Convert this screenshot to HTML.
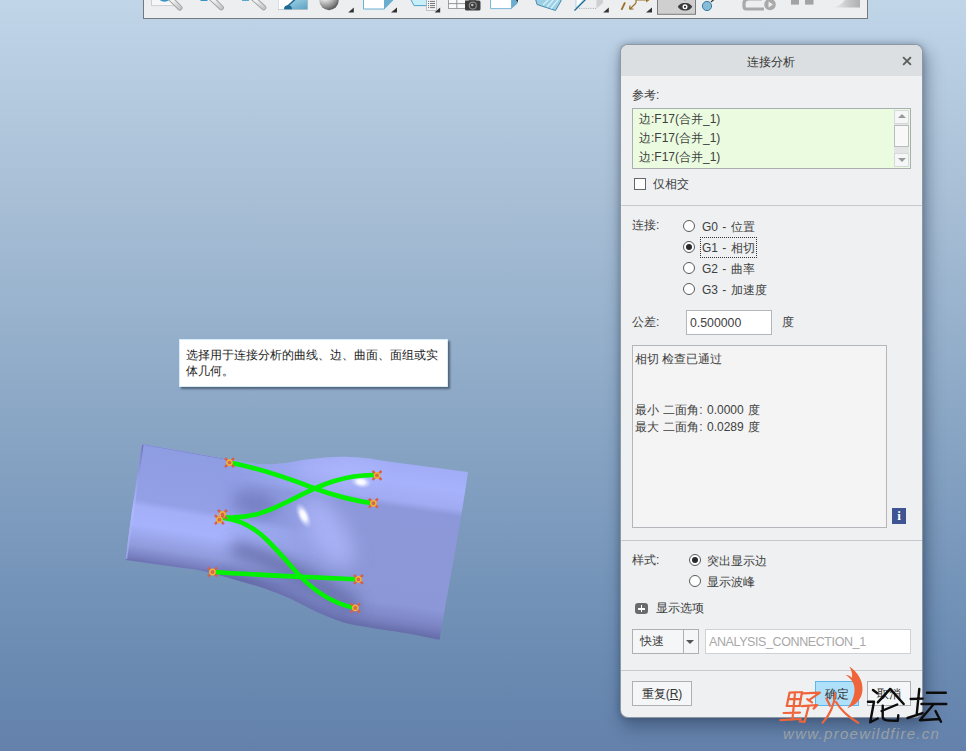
<!DOCTYPE html>
<html><head><meta charset="utf-8">
<style>
*{margin:0;padding:0;box-sizing:border-box}
html,body{width:966px;height:751px;overflow:hidden}
body{position:relative;font-family:"Liberation Sans",sans-serif;font-size:12px;color:#333;
background:linear-gradient(to bottom,#c0d5e8 0%,#a7bed5 27%,#86a3c3 60%,#7090b6 82%,#6381ab 100%)}
.a{position:absolute}
.t{position:absolute;white-space:nowrap;font-size:12px;color:#404040;line-height:14px}
#tb{left:143px;top:-2px;width:725px;height:21px;background:#eceef0;border:1px solid #75797d;border-top:none}
#dlg{left:621px;top:45px;width:301px;height:672px;background:#eef0f2;border-radius:7px;box-shadow:0 0 0 1px #8d98a4,0 0 6px 1px rgba(30,45,70,.3),3px 8px 16px 3px rgba(20,35,60,.35)}
#ttl{left:621px;top:45px;width:301px;height:31px;background:#dcdfe1;border-radius:7px 7px 0 0}
.sep{position:absolute;left:621px;width:301px;height:1px;background:#c6c9cd}
.radio{position:absolute;width:12px;height:12px;border:1px solid #5a5a5a;border-radius:50%;background:#fff}
.radio.on::after{content:"";position:absolute;left:2px;top:2px;width:6px;height:6px;border-radius:50%;background:#2a2a2a}
.btn{position:absolute;border:1px solid #adb1b5;background:#f5f6f7;text-align:center;font-size:12px;color:#333;line-height:24px}
#tip{left:179px;top:339px;width:269px;height:48px;background:#fff;border:1px solid #d6ecf9;box-shadow:2px 2px 2px rgba(40,50,70,.6)}
</style></head><body>

<div id="tb" class="a"></div>
<svg class="a" style="left:0;top:0" width="966" height="20" viewBox="0 0 966 20">
<defs>
<linearGradient id="hdl" x1="0" y1="0" x2="1" y2="1"><stop offset="0" stop-color="#fff"/><stop offset="1" stop-color="#c8c8c8"/></linearGradient>
<linearGradient id="blu" x1="0" y1="0" x2="1" y2="1"><stop offset="0" stop-color="#b8e0ee"/><stop offset="1" stop-color="#5aa2c4"/></linearGradient>
<radialGradient id="sph" cx="0.3" cy="0.2" r="0.8"><stop offset="0" stop-color="#ffffff"/><stop offset="0.35" stop-color="#e0e0e0"/><stop offset="0.8" stop-color="#8c8c8c"/><stop offset="1" stop-color="#5e5e5e"/></radialGradient>
<linearGradient id="gry" x1="0" y1="0" x2="1" y2="0"><stop offset="0" stop-color="#f0f0f0"/><stop offset="0.6" stop-color="#c6c6c6"/><stop offset="1" stop-color="#b0b0b0"/></linearGradient>
</defs>
<!-- zoom box -->
<path d="M151.5,-2 L174,-2 L174,5.6 L151.5,5.6 Z" fill="#f6f6f6" stroke="#c4c4c4" stroke-width="0.8"/>
<path d="M159.5,-1 Q164.5,2.8 169.5,-1" fill="none" stroke="#3a93c4" stroke-width="1.6"/>
<path d="M170,-2 L179.8,7.8" stroke="#a4a4a4" stroke-width="5.4" stroke-linecap="round"/>
<path d="M170,-2 L179.8,7.8" stroke="url(#hdl)" stroke-width="3.4" stroke-linecap="round"/>
<!-- zoom in -->
<path d="M200.5,0 L207.5,0 L207.5,1 L200.5,1Z" fill="#3a93c4"/>
<path d="M211,-2 L221.2,7.6" stroke="#a4a4a4" stroke-width="5.4" stroke-linecap="round"/>
<path d="M211,-2 L221.2,7.6" stroke="url(#hdl)" stroke-width="3.4" stroke-linecap="round"/>
<!-- zoom out -->
<path d="M242,0 L249,0 L249,0.8 L242,0.8Z" fill="#3a93c4"/>
<path d="M253,-2 L263.6,7.6" stroke="#a4a4a4" stroke-width="5.4" stroke-linecap="round"/>
<path d="M253,-2 L263.6,7.6" stroke="url(#hdl)" stroke-width="3.4" stroke-linecap="round"/>
<!-- refit / orient -->
<rect x="278.5" y="-2" width="29" height="11.3" fill="url(#blu)" stroke="#9ab" stroke-width="0.6"/>
<path d="M278.5,-2 L296,-2 L284.5,9.3 L278.5,9.3Z" fill="#fff"/>
<path d="M285,8.5 L295.5,-1" stroke="#1d6a92" stroke-width="1.5"/>
<path d="M284,9.3 A4,4 0 0 1 292,9.3Z" fill="#1d6a92"/>
<!-- sphere -->
<circle cx="329" cy="0.5" r="9.7" fill="url(#sph)"/>
<path d="M353.8,7.5 L353.8,12.6 L348.2,12.6Z" fill="#333"/>
<!-- cube -->
<path d="M363.5,-2 L384.5,-2 L384.5,9 L363.5,9Z" fill="#fff" stroke="#6ab0d2" stroke-width="1"/>
<path d="M384.5,-2 L393,-2 L393,0.5 L384.5,9.3Z" fill="#6aaecf"/>
<path d="M397,7.5 L397,12.6 L391,12.6Z" fill="#333"/>
<!-- view mgr -->
<path d="M410,-2 L426.5,-2 L426.5,5.6 L414,5.6 Z" fill="#c8eefa" stroke="#3f9acb" stroke-width="0.9"/>
<path d="M426.5,-2 L436.5,-2 L436.5,10.5 L426.5,10.5Z" fill="#f3f5f6" stroke="#aaa" stroke-width="0.7"/>
<path d="M430,1.4h5M430,3.5h5M430,5.6h5M430,7.6h5" stroke="#666" stroke-width="0.9"/><path d="M428.2,1.4h0.9M428.2,3.5h0.9M428.2,5.6h0.9M428.2,7.6h0.9" stroke="#444" stroke-width="0.9"/>
<path d="M440.2,7.5 L440.2,12.6 L434.6,12.6Z" fill="#333"/>
<!-- grid + camera -->
<rect x="448.5" y="-2" width="17" height="10.5" fill="#f8f9fa" stroke="#8a8a8a" stroke-width="0.8"/>
<path d="M456.8,-2V8.5M448.5,3.6H465.5" stroke="#8a8a8a" stroke-width="0.9"/>
<rect x="465" y="0.5" width="15.5" height="10" rx="1.5" fill="#3c3c3c"/>
<path d="M468.5,0.8 L470,-1 L475,-1 L476.5,0.8Z" fill="#3c3c3c"/>
<circle cx="472.8" cy="5.6" r="4.1" fill="#8a8a8a"/>
<circle cx="472.8" cy="5.6" r="2.9" fill="#3a3a3a"/>
<circle cx="472.3" cy="5" r="1.3" fill="#bbb"/>
<!-- cube 2 -->
<path d="M490.5,-2 L511.5,-2 L511.5,8.6 L490.5,8.6Z" fill="#fff" stroke="#7bbad8" stroke-width="1"/>
<path d="M511.5,-2 L517.5,-2 L517.5,3.5 L511.5,8.8Z" fill="#6aaecf"/>
<path d="M515,-1 L518,-1 L518,2.5Z" fill="#333"/>
<!-- glass -->
<path d="M535.5,-1 L561,-1 L561,1 L555.5,10.5 L537,4.5Z" fill="#9dcfe4" stroke="#3580a8" stroke-width="0.9"/>
<path d="M543,5 L549,-1M547,7 L554,-1M551,8.5 L558,0" stroke="#d6f0fa" stroke-width="1.3"/>
<!-- section -->
<path d="M576,-2 L585,-2 L576,8Z" fill="#fff" stroke="#8cc6e0" stroke-width="0.7"/>
<path d="M574.5,10.5 L585.5,-0.5" stroke="#1d6a92" stroke-width="1.3"/>
<path d="M579,8.4 L597,8.4" stroke="#999" stroke-width="0.8" stroke-dasharray="1 1.3"/>
<path d="M596.5,-2 L603,-2 L603,3 L596.5,8.4Z" fill="#c8c8c8" opacity="0.8"/>
<path d="M608.8,7.5 L608.8,12.6 L603.2,12.6Z" fill="#333"/>
<!-- coord sys -->
<path d="M625,2.5 L621.5,9.8" stroke="#9a7328" stroke-width="1.8"/>
<path d="M630,9 L636,3 M636,3 L636,0 L648,0 M629.5,9.2 L630,5.5 M629.5,9.2 L633.5,9" fill="none" stroke="#9a7328" stroke-width="1.2"/>
<path d="M646,-2.5 L649.5,0 L646,2.5Z" fill="#9a7328"/>
<path d="M652,7.5 L652,12.6 L646,12.6Z" fill="#333"/>
<!-- pressed eye -->
<rect x="657.5" y="-2" width="38" height="16.3" fill="#cfcfcf" stroke="#7b7b7b" stroke-width="1"/>
<path d="M677.8,6.8 C680,3.2 683,3 685,3 C687,3 690,3.2 692.2,6.8 C690,10.4 687,10.6 685,10.6 C683,10.6 680,10.4 677.8,6.8Z" fill="#3b3b3b"/>
<circle cx="685" cy="6.8" r="2.5" fill="#fff"/>
<circle cx="685" cy="6.8" r="1.1" fill="#222"/>
<path d="M685,-2 L685,0.8" stroke="#888" stroke-width="0.8"/>
<!-- blue dot -->
<path d="M711,2 L714.5,-1" stroke="#333" stroke-width="1.2"/>
<circle cx="707" cy="6" r="4.6" fill="#87bcd8" stroke="#2a6f96" stroke-width="0.9"/>
<!-- disabled loop -->
<path d="M746,9 L764,9 M746,9 Q744,9 744,6 L744,3 Q744,0 748,-1 L762,-1" fill="none" stroke="#a9a9a9" stroke-width="3.2"/>
<circle cx="770" cy="4.5" r="5.8" fill="#a9a9a9"/>
<path d="M768.5,1.5 L773,4.5 L768.5,7.5Z" fill="#eee"/>
<rect x="791" y="-2" width="8" height="6.6" fill="#a3a3a3"/>
<rect x="805" y="-2" width="8.5" height="6.6" fill="#a3a3a3"/>
<path d="M832,7.5 Q842,6 846,-2 L860,-2 L860,7.5Z" fill="url(#gry)"/>
</svg>

<!-- model -->
<svg class="a" style="left:0;top:0" width="966" height="751" viewBox="0 0 966 751">
<defs>
<linearGradient id="gL" gradientUnits="userSpaceOnUse" x1="142" y1="444" x2="123" y2="560">
<stop offset="0" stop-color="#8e9ce2"/>
<stop offset="0.47" stop-color="#93a0e6"/>
<stop offset="0.53" stop-color="#a3b0f8"/>
<stop offset="0.68" stop-color="#a6b2fb"/>
<stop offset="0.86" stop-color="#909bdc"/>
<stop offset="0.96" stop-color="#767ebe"/>
<stop offset="1" stop-color="#686fae"/>
</linearGradient>
<linearGradient id="gR" gradientUnits="userSpaceOnUse" x1="471" y1="456" x2="445" y2="641">
<stop offset="0" stop-color="#9ca8f0"/>
<stop offset="0.19" stop-color="#a7b2fc"/>
<stop offset="0.29" stop-color="#a0abf2"/>
<stop offset="0.33" stop-color="#8d98da"/>
<stop offset="0.84" stop-color="#8c97d7"/>
<stop offset="0.94" stop-color="#7a82c2"/>
<stop offset="1" stop-color="#686eac"/>
</linearGradient>
<linearGradient id="gM" gradientUnits="userSpaceOnUse" x1="225" y1="0" x2="345" y2="0">
<stop offset="0" stop-color="#fff"/>
<stop offset="1" stop-color="#000"/>
</linearGradient>
<mask id="mL" maskUnits="userSpaceOnUse" x="0" y="0" width="966" height="751"><rect x="0" y="0" width="966" height="751" fill="url(#gM)"/></mask>
<radialGradient id="hl1" cx="0.5" cy="0.5" r="0.5">
<stop offset="0" stop-color="#fff" stop-opacity="1"/>
<stop offset="0.35" stop-color="#f8f9ff" stop-opacity="0.95"/>
<stop offset="1" stop-color="#c0c8ff" stop-opacity="0"/>
</radialGradient>
<radialGradient id="dk" cx="0.5" cy="0.5" r="0.5">
<stop offset="0" stop-color="#6a72b4" stop-opacity="0.75"/>
<stop offset="1" stop-color="#6a72b4" stop-opacity="0"/>
</radialGradient>
<radialGradient id="lt" cx="0.5" cy="0.5" r="0.5">
<stop offset="0" stop-color="#b2baff" stop-opacity="0.9"/>
<stop offset="1" stop-color="#b2baff" stop-opacity="0"/>
</radialGradient>
<linearGradient id="botE" gradientUnits="userSpaceOnUse" x1="0" y1="575" x2="0" y2="630">
<stop offset="0" stop-color="#6a70b0" stop-opacity="0"/>
<stop offset="1" stop-color="#6a70b0" stop-opacity="0.6"/>
</linearGradient>
<linearGradient id="rim" gradientUnits="userSpaceOnUse" x1="0" y1="444" x2="0" y2="560"><stop offset="0" stop-color="#7078bc"/><stop offset="0.3" stop-color="#959fe6"/><stop offset="0.6" stop-color="#b0b9fa"/><stop offset="1" stop-color="#98a1e8"/></linearGradient>
<clipPath id="body"><path d="M142,444 L212,456.5 C214.7,457.0 221.7,458.2 228.0,459.3 C234.3,460.4 243.5,461.9 250.0,462.8 C256.5,463.7 261.0,464.6 267.0,464.6 C273.0,464.6 279.4,463.8 286.0,463.0 C292.6,462.2 300.0,460.5 306.7,459.6 C313.4,458.7 319.4,458.0 326.0,457.5 C332.6,457.0 339.5,456.7 346.0,456.8 C352.5,456.9 358.5,457.3 365.0,458.0 C371.5,458.7 378.3,460.0 385.0,461.0 C391.7,462.0 401.7,463.3 405.0,463.8 L468,472 C460,528 449,584 439.5,639.7 C434.1,638.6 416.1,634.8 407.0,633.2 C397.9,631.6 391.5,631.0 385.0,630.0 C378.5,629.0 375.3,628.6 368.2,627.3 C361.1,626.0 350.9,624.6 342.3,622.0 C333.7,619.4 325.1,615.7 316.5,611.8 C307.9,607.9 299.2,602.7 290.6,598.8 C282.0,594.9 273.3,591.5 264.7,588.5 C256.1,585.5 247.0,583.1 238.8,580.7 C230.6,578.3 222.0,575.9 215.5,574.2 C209.0,572.5 205.1,571.4 200.0,570.4 C194.9,569.4 187.5,568.6 185.0,568.3 L125.5,560 C130,522 136,483 142,444 Z"/></clipPath>
<filter id="bl" x="-50%" y="-50%" width="200%" height="200%"><feGaussianBlur stdDeviation="6"/></filter>
<filter id="bl3" x="-100%" y="-100%" width="300%" height="300%"><feGaussianBlur stdDeviation="7.5"/></filter>
<filter id="bl2" x="-100%" y="-100%" width="300%" height="300%"><feGaussianBlur stdDeviation="9"/></filter>
</defs>
<g clip-path="url(#body)">
<rect x="100" y="420" width="400" height="240" fill="url(#gR)"/>
<rect x="100" y="420" width="400" height="240" fill="url(#gL)" mask="url(#mL)"/>
<ellipse cx="255" cy="504" rx="24" ry="13" transform="rotate(12 255 504)" fill="#6369aa" opacity="0.55" filter="url(#bl3)"/>
<path d="M238,549 C262,555 292,570 352,604" fill="none" stroke="#585e98" stroke-width="16" stroke-linecap="round" opacity="0.7" filter="url(#bl3)"/>
<ellipse cx="328" cy="532" rx="18" ry="40" transform="rotate(-32 328 532)" fill="#b0b8fc" opacity="0.75" filter="url(#bl2)"/>
<ellipse cx="340" cy="470" rx="45" ry="10" transform="rotate(3 340 470)" fill="#b0b8fc" opacity="0.6" filter="url(#bl2)"/>
<path d="M225,572 C250,578 270,586 295,598 C318,610 340,620 368,627 L442,640 L442,665 L210,665Z" fill="#5f66a0" opacity="0.75" filter="url(#bl)"/>
<path d="M142.5,445 L131,525 L126,559" fill="none" stroke="url(#rim)" stroke-width="2.2"/>
<path d="M142,444 L228,459.5" stroke="#6a72b4" stroke-width="1" opacity="0.6"/>
<ellipse cx="303.5" cy="515.5" rx="6.5" ry="14" transform="rotate(-25 303.5 515.5)" fill="url(#hl1)"/>
<ellipse cx="361" cy="482" rx="11" ry="6.5" transform="rotate(10 361 482)" fill="url(#hl1)"/>
</g>
<g fill="none" stroke="#02f202" stroke-width="4.6" stroke-linecap="round">
<path d="M230,462.5 C252,467 285,477 312,487.5 C335,496 355,501 373.5,503.4"/>
<path d="M222,517 C248,520 268,512 295,498 C320,485 345,474 377.5,475"/>
<path d="M224,518 C240,520 254,527 267,540 C280,553 290,565 299,575 C315,592 335,604 355,608"/>
<path d="M212.5,572 C260,575 310,577 358,579.4"/>
</g>
<g id="mk">
<g transform="translate(229.5 462.6)"><path d="M-4.5,-4.5L4.5,4.5M-4.5,4.5L4.5,-4.5" stroke="#d4604e" stroke-width="2.4"/><circle r="2.7" fill="#d56a4a" stroke="#f2b33a" stroke-width="1.5"/></g>
<g transform="translate(222.5 514.4)"><path d="M-4.5,-4.5L4.5,4.5M-4.5,4.5L4.5,-4.5" stroke="#d4604e" stroke-width="2.4"/><circle r="2.7" fill="#d56a4a" stroke="#f2b33a" stroke-width="1.5"/></g>
<g transform="translate(219.4 519.7)"><path d="M-4.5,-4.5L4.5,4.5M-4.5,4.5L4.5,-4.5" stroke="#d4604e" stroke-width="2.4"/><circle r="2.7" fill="#d56a4a" stroke="#f2b33a" stroke-width="1.5"/></g>
<g transform="translate(212.5 572)"><path d="M-4.5,-4.5L4.5,4.5M-4.5,4.5L4.5,-4.5" stroke="#d4604e" stroke-width="2.4"/><circle r="2.7" fill="#d56a4a" stroke="#f2b33a" stroke-width="1.5"/></g>
<g transform="translate(377 475.4)"><path d="M-4.5,-4.5L4.5,4.5M-4.5,4.5L4.5,-4.5" stroke="#d4604e" stroke-width="2.4"/><circle r="2.7" fill="#d56a4a" stroke="#f2b33a" stroke-width="1.5"/></g>
<g transform="translate(373.4 503.2)"><path d="M-4.5,-4.5L4.5,4.5M-4.5,4.5L4.5,-4.5" stroke="#d4604e" stroke-width="2.4"/><circle r="2.7" fill="#d56a4a" stroke="#f2b33a" stroke-width="1.5"/></g>
<g transform="translate(358.4 579.4)"><path d="M-4.5,-4.5L4.5,4.5M-4.5,4.5L4.5,-4.5" stroke="#d4604e" stroke-width="2.4"/><circle r="2.7" fill="#d56a4a" stroke="#f2b33a" stroke-width="1.5"/></g>
<g transform="translate(355.3 607.9)"><path d="M-4.5,-4.5L4.5,4.5M-4.5,4.5L4.5,-4.5" stroke="#d4604e" stroke-width="2.4"/><circle r="2.7" fill="#d56a4a" stroke="#f2b33a" stroke-width="1.5"/></g>
</g>
</svg>

<div id="tip" class="a"><div class="t" style="left:6px;top:7px;line-height:16px;white-space:normal;width:262px;color:#222">选择用于连接分析的曲线、边、曲面、面组或实体几何。</div></div>

<!-- dialog -->
<div id="dlg" class="a"></div>
<div id="ttl" class="a"></div>
<div class="t" style="left:747px;top:55px;font-size:12.3px;color:#333">连接分析</div>
<svg class="a" style="left:900px;top:54px" width="14" height="14" viewBox="0 0 14 14"><path d="M3.8,3.8 L10.2,10.2 M10.2,3.8 L3.8,10.2" stroke="#5e5e5e" stroke-width="1.9" stroke-linecap="square"/></svg>

<div class="t" style="left:632px;top:88px">参考:</div>
<div class="a" style="left:632px;top:108px;width:279px;height:61px;border:1px solid #a9aeb3;background:#eafbdf"></div>
<div class="t" style="left:639px;top:112px">边:F17(合并_1)</div>
<div class="t" style="left:639px;top:131px">边:F17(合并_1)</div>
<div class="t" style="left:639px;top:150px">边:F17(合并_1)</div>
<!-- scrollbar -->
<div class="a" style="left:894px;top:110px;width:15px;height:57px;background:#e2e4e6"></div>
<div class="a" style="left:894px;top:110px;width:15px;height:14px;background:#f5f6f7;border:1px solid #d6d8da"></div>
<div class="a" style="left:894px;top:125px;width:15px;height:22px;background:#f8f8f9;border:1px solid #b9bcbf"></div>
<div class="a" style="left:894px;top:153px;width:15px;height:14px;background:#f5f6f7;border:1px solid #d6d8da"></div>
<div class="a" style="left:898px;top:114px;width:0;height:0;border-left:4px solid transparent;border-right:4px solid transparent;border-bottom:4px solid #999"></div>
<div class="a" style="left:898px;top:158px;width:0;height:0;border-left:4px solid transparent;border-right:4px solid transparent;border-top:4px solid #999"></div>

<div class="a" style="left:634px;top:178px;width:12px;height:12px;border:1px solid #666;background:#fff"></div>
<div class="t" style="left:653px;top:177px">仅相交</div>

<div class="sep" style="top:205px"></div>

<div class="t" style="left:632px;top:218px">连接:</div>
<div class="radio" style="left:683px;top:220px"></div>
<div class="radio on" style="left:683px;top:241px"></div>
<div class="radio" style="left:683px;top:262px"></div>
<div class="radio" style="left:683px;top:283px"></div>
<div class="t" style="left:702px;top:220px;word-spacing:1px">G0 - 位置</div>
<div class="a" style="left:700px;top:237px;width:57px;height:21px;border:1px dotted #333"></div>
<div class="t" style="left:702px;top:241px;word-spacing:1px">G1 - 相切</div>
<div class="t" style="left:702px;top:262px;word-spacing:1px">G2 - 曲率</div>
<div class="t" style="left:702px;top:283px;word-spacing:1px">G3 - 加速度</div>

<div class="t" style="left:632px;top:315px">公差:</div>
<div class="a" style="left:686px;top:310px;width:86px;height:25px;border:1px solid #b3b7bb;background:#fff"></div>
<div class="t" style="left:690px;top:316px;font-size:12.3px">0.500000</div>
<div class="t" style="left:782px;top:315px">度</div>

<div class="a" style="left:632px;top:345px;width:255px;height:183px;border:1px solid #b3b7bb;background:#f4f4f4"></div>
<div class="t" style="left:635px;top:352px">相切 检查已通过</div>
<div class="t" style="left:635px;top:403px;word-spacing:1px">最小 二面角: 0.0000 度</div>
<div class="t" style="left:635px;top:420px;word-spacing:1px">最大 二面角: 0.0289 度</div>
<div class="a" style="left:892px;top:508px;width:14px;height:16px;background:#3e5493;color:#fff;font-family:'Liberation Serif',serif;font-weight:bold;font-size:13px;line-height:16px;text-align:center">i</div>

<div class="sep" style="top:540px"></div>

<div class="t" style="left:632px;top:553px">样式:</div>
<div class="radio on" style="left:689px;top:554px"></div>
<div class="radio" style="left:689px;top:575px"></div>
<div class="t" style="left:707px;top:554px">突出显示边</div>
<div class="t" style="left:707px;top:575px">显示波峰</div>

<div class="a" style="left:635px;top:603px;width:13px;height:11px;border-radius:3px;background:#6b6b6b"></div>
<div class="a" style="left:638px;top:608px;width:7px;height:1.5px;background:#fff"></div>
<div class="a" style="left:640.8px;top:605px;width:1.5px;height:7px;background:#fff"></div>
<div class="t" style="left:656px;top:601px">显示选项</div>

<div class="btn" style="left:632px;top:629px;width:67px;height:25px"></div>
<div class="a" style="left:683px;top:630px;width:1px;height:23px;background:#adb1b5"></div>
<div class="t" style="left:640px;top:634px">快速</div>
<div class="a" style="left:686px;top:640px;width:0;height:0;border-left:4px solid transparent;border-right:4px solid transparent;border-top:4px solid #555"></div>
<div class="a" style="left:705px;top:629px;width:206px;height:25px;border:1px solid #cfd2d5;background:#fff"></div>
<div class="t" style="left:709px;top:635px;color:#a8a8a8;font-size:12.5px;letter-spacing:-0.4px">ANALYSIS_CONNECTION_1</div>

<div class="sep" style="top:670px"></div>

<div class="btn" style="left:632px;top:681px;width:60px;height:25px">重复(<u>R</u>)</div>
<div class="btn" style="left:815px;top:681px;width:44px;height:25px;background:#aee0fa;border-color:#5eb6ea">确定</div>
<div class="btn" style="left:867px;top:681px;width:44px;height:25px">取消</div>


<!-- watermark -->
<svg class="a" style="left:770px;top:655px" width="196" height="96" viewBox="770 655 196 96">
<g fill="none" stroke="#f0643a" stroke-width="2.2" stroke-linecap="round" stroke-linejoin="round">
<path d="M789.5,692.7 L802,692 M789.5,692.7 L786.8,706 M802,692 L799.6,706 M788.2,699.2 L800.8,699 M786.6,706 L800,706 M795,692.8 L792.4,719.6 M783.6,713 L800,712.6 M780.4,720.2 L800.8,719"/>
<path d="M802.8,693.4 L819.9,692.7 L808.6,700.4 M807.2,699.2 L812,702.3 M802,706.2 L817.3,705 L813.6,708.6 M808.6,706.2 L804.6,721.8 L799.6,721.4"/>
<path d="M826.4,698.6 L830,705.8 M835.3,693.6 C834,706 830,715 822.6,722.8 M836,702 C842,712 850,718 858.2,722.8"/>
</g>
<path d="M849.3,666.5 C858,672 863,681 862.5,690 C862,699 856,705 847.5,708.2 C852,702 855,695 854.5,688 C854,682 850,678 845.5,674.8 C848.5,675 850.5,676.5 852,678 C852.5,674 851.5,670 849.3,666.5Z" fill="#f0643a"/>
<g fill="none" stroke="#0c0c0c" stroke-width="2.4" stroke-linecap="round" stroke-linejoin="round">
<path d="M873,690 L877.3,693.2 M868,701.8 L874,701.8 L870.2,722.3 L877.8,718.5"/>
<path d="M877.8,702.4 L890.2,688.9 L903.7,704 M881.6,711 L897.2,704.5 M882.7,705.6 L882.7,717 C883,720.5 886,720.8 897.8,720.7 L898.3,715.3"/>
<path d="M919.3,688.9 L916.6,715.3 M910.7,699 L922.6,698.6 M907.5,718 L922.6,713.1"/>
<path d="M926.9,692.7 L945.8,692.7 M921.5,704 L946.3,704 M933.4,704.5 L919.9,720.2 L939.8,719 M935.5,711 L941,721.8"/>
</g>
</svg>
<div class="t" style="left:783px;top:726px;font-size:15px;line-height:16px;color:#9aa0a6;font-style:italic;letter-spacing:1.3px">www.proewildfire.cn</div>
</body></html>
